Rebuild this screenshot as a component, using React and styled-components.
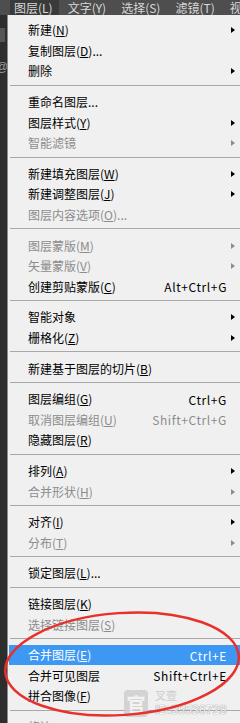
import React from "react";
import styled, { createGlobalStyle } from "styled-components";

const Global = createGlobalStyle`
  html, body { margin: 0; padding: 0; background: #2e2e2e; overflow: hidden; }
  body { font-family: "Noto Sans CJK SC", "Noto Sans", sans-serif; }
`;

const Page = styled.div`
  position: relative;
  width: 240px;
  height: 723px;
  overflow: hidden;
  display: flex;
  flex-direction: column;
  background: #2e2e2e;
`;

const MenuBar = styled.div`
  height: 15px;
  flex: none;
  background: #4e4e4e;
  display: flex;
  align-items: stretch;
  padding-left: 10px;
  gap: 5px;
  white-space: nowrap;
`;

const BarItem = styled.div`
  display: flex;
  align-items: center;
  padding: 0 6px 0 4px;
  font-size: 12px;
  line-height: 15px;
  color: #d8d8d8;
  background: ${(p) => (p.$active ? "#3a3a3a" : "transparent")};
`;

const Body = styled.div`
  flex: 1;
  display: flex;
  min-height: 0;
`;

const LeftStrip = styled.div`
  width: 7px;
  flex: none;
  background: #2d2d2d;
  display: flex;
  flex-direction: column;
  padding-top: 13px;
  gap: 19px;
`;

const StripBlock = styled.div`
  width: 5px;
  height: 14px;
  background: #555;
`;

const StripGlyph = styled.div`
  font-family: "Liberation Sans", sans-serif;
  font-size: 12px;
  line-height: 12px;
  color: #9a9a9a;
  margin-left: -4px;
`;

const Menu = styled.div`
  flex: 1;
  background: #f0f0f0;
  border-left: 1px solid #8a8a8a;
  padding-top: 5px;
  display: flex;
  flex-direction: column;
`;

const Item = styled.div`
  height: 20.6px;
  flex: none;
  display: grid;
  grid-template-columns: 1fr auto 13px;
  align-items: center;
  padding-left: 19px;
  margin-left: 1px;
  font-size: 12px;
  white-space: nowrap;
  color: ${(p) => (p.$hl ? "#ffffff" : p.$disabled ? "#8c8c8c" : "#000000")};
  background: ${(p) => (p.$hl ? "#3d98f4" : "transparent")};
`;

const Label = styled.span`
  line-height: 14px;
`;

const Key = styled.span`
  text-decoration: underline;
  text-underline-offset: 1px;
`;

const Shortcut = styled.span`
  font-family: "Noto Sans CJK SC", "Noto Sans", sans-serif;
  font-size: 12px;
  letter-spacing: 0.6px;
  text-align: right;
`;

const Arrow = styled.span`
  width: 0;
  height: 0;
  margin-left: 4px;
  border-top: 3.5px solid transparent;
  border-bottom: 3.5px solid transparent;
  border-left: 4px solid ${(p) => (p.$disabled ? "#8c8c8c" : "#000")};
`;

const Sep = styled.div`
  height: 10px;
  flex: none;
  display: flex;
  flex-direction: column;
  padding-top: 3px;
  box-sizing: border-box;
  margin-left: 2px;
  &::before {
    content: "";
    display: block;
    height: 1px;
    background: #a8a8a8;
  }
`;

const Overlay = styled.svg`
  position: absolute;
  left: 0;
  top: 0;
  pointer-events: none;
`;

const Watermark = styled.div`
  position: absolute;
  left: 124px;
  top: 688px;
  display: flex;
  gap: 7px;
  opacity: 0.85;
`;

const WmLogo = styled.div`
  width: 24px;
  height: 27px;
  margin-top: 2px;
  border-radius: 4px;
  background: #cfcfcf;
  color: #f4f4f4;
  font-size: 19px;
  line-height: 27px;
  text-align: center;
  font-weight: 700;
`;

const WmText = styled.div`
  display: flex;
  flex-direction: column;
  gap: 1px;
`;

const WmName = styled.span`
  font-size: 11px;
  line-height: 14px;
  color: #c6c6c6;
`;

const WmId = styled.span`
  font-family: "Liberation Sans", sans-serif;
  font-size: 12.5px;
  line-height: 14px;
  color: #fafafa;
  text-shadow: 0 0 1px #8a8a8a, 0 0 1px #8a8a8a;
`;

const M = ({ text, k, tail = "" }) => (
  <Label>
    {text}
    {k ? (
      <>
        (<Key>{k}</Key>)
      </>
    ) : null}
    {tail}
  </Label>
);

const items = [
  { t: "新建", k: "N", sub: true },
  { t: "复制图层", k: "D", tail: "..." },
  { t: "删除", sub: true },
  "sep",
  { t: "重命名图层..." },
  { t: "图层样式", k: "Y", sub: true },
  { t: "智能滤镜", sub: true, dis: true },
  "sep",
  { t: "新建填充图层", k: "W", sub: true },
  { t: "新建调整图层", k: "J", sub: true },
  { t: "图层内容选项", k: "O", tail: "...", dis: true },
  "sep",
  { t: "图层蒙版", k: "M", sub: true, dis: true },
  { t: "矢量蒙版", k: "V", sub: true, dis: true },
  { t: "创建剪贴蒙版", k: "C", sc: "Alt+Ctrl+G" },
  "sep",
  { t: "智能对象", sub: true },
  { t: "栅格化", k: "Z", sub: true },
  "sep",
  { t: "新建基于图层的切片", k: "B" },
  "sep",
  { t: "图层编组", k: "G", sc: "Ctrl+G" },
  { t: "取消图层编组", k: "U", sc: "Shift+Ctrl+G", dis: true },
  { t: "隐藏图层", k: "R" },
  "sep",
  { t: "排列", k: "A", sub: true },
  { t: "合并形状", k: "H", sub: true, dis: true },
  "sep",
  { t: "对齐", k: "I", sub: true },
  { t: "分布", k: "T", sub: true, dis: true },
  "sep",
  { t: "锁定图层", k: "L", tail: "..." },
  "sep",
  { t: "链接图层", k: "K" },
  { t: "选择链接图层", k: "S", dis: true },
  "sep",
  { t: "合并图层", k: "E", sc: "Ctrl+E", hl: true },
  { t: "合并可见图层", sc: "Shift+Ctrl+E" },
  { t: "拼合图像", k: "F" },
  "sep",
  { t: "修边", sub: true, dis: true },
];

export default function App() {
  return (
    <Page>
      <Global />
      <MenuBar>
        <BarItem $active>图层(L)</BarItem>
        <BarItem>文字(Y)</BarItem>
        <BarItem>选择(S)</BarItem>
        <BarItem>滤镜(T)</BarItem>
        <BarItem>视</BarItem>
      </MenuBar>
      <Body>
        <LeftStrip>
          <StripBlock />
          <StripGlyph>@</StripGlyph>
        </LeftStrip>
        <Menu>
          {items.map((it, i) =>
            it === "sep" ? (
              <Sep key={i} />
            ) : (
              <Item key={i} $disabled={it.dis} $hl={it.hl}>
                <M text={it.t} k={it.k} tail={it.tail} />
                <Shortcut>{it.sc || ""}</Shortcut>
                {it.sub ? <Arrow $disabled={it.dis} /> : <span />}
              </Item>
            )
          )}
        </Menu>
      </Body>
      <Watermark>
        <WmLogo>官</WmLogo>
        <WmText>
          <WmName>叉壹</WmName>
          <WmId>ID:35536728</WmId>
        </WmText>
      </Watermark>
      <Overlay width="240" height="723" viewBox="0 0 240 723">
        <ellipse
          cx="122"
          cy="664"
          rx="117"
          ry="51"
          fill="none"
          stroke="#e8302c"
          strokeWidth="2.5"
          transform="rotate(-4 122 664)"
        />
      </Overlay>
    </Page>
  );
}
